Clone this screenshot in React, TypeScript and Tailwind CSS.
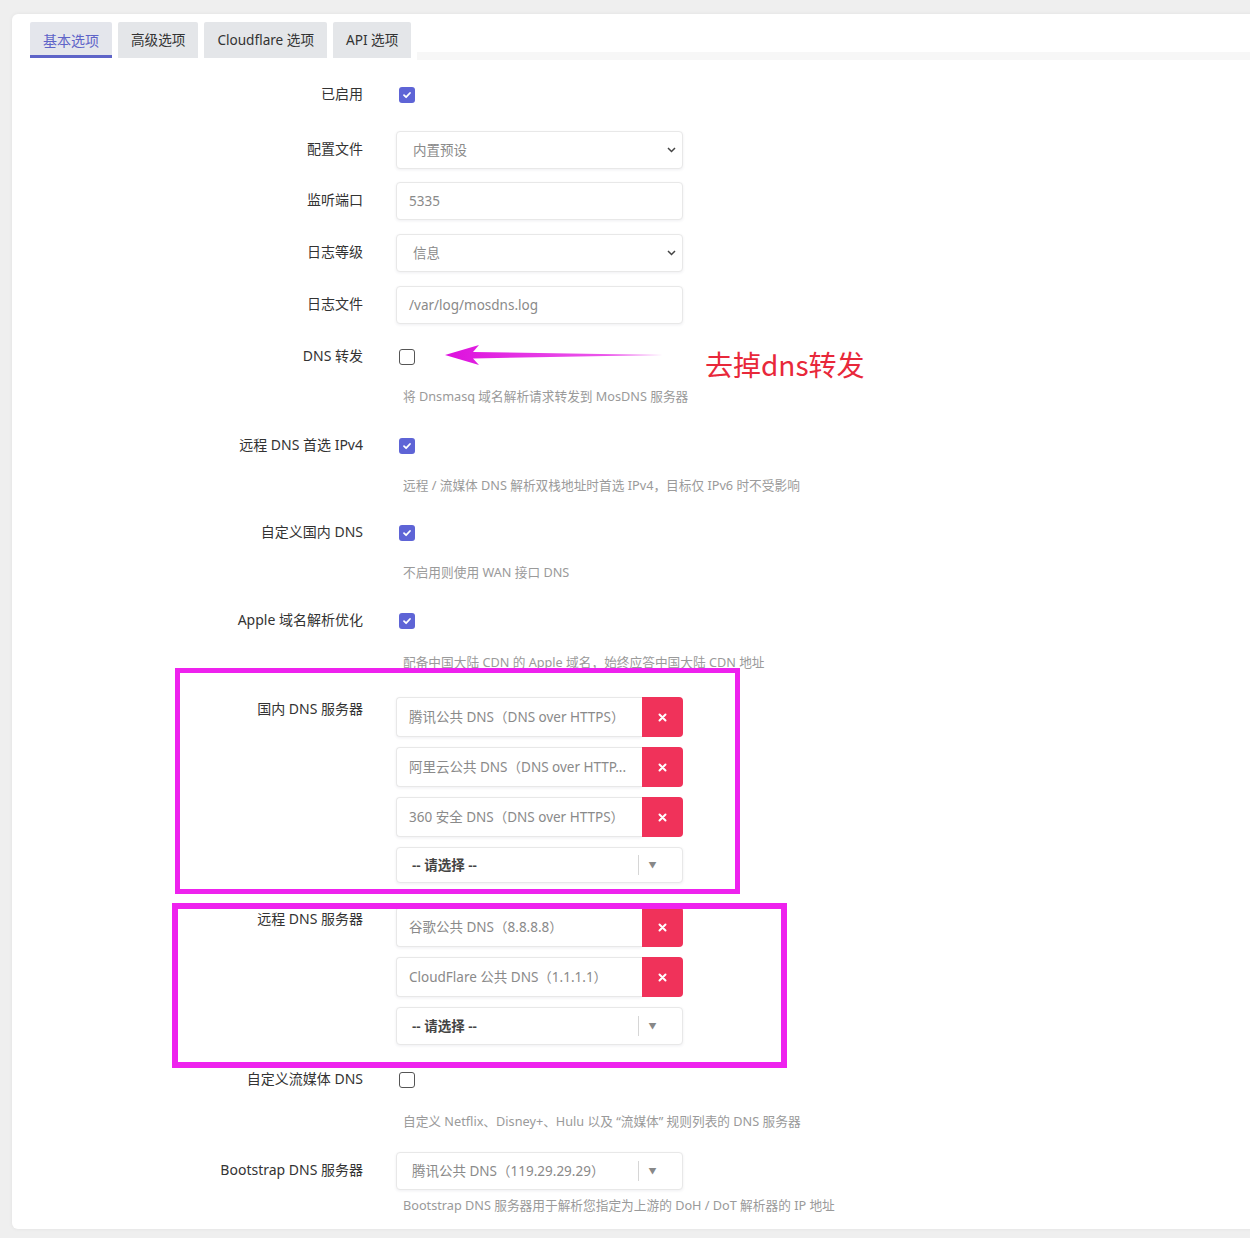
import React from "react";

const font = "font-['Noto_Sans','Noto_Sans_CJK_SC',sans-serif]";

function Check({ on }: { on: boolean }) {
  return on ? (
    <span className="ml-[3px] flex h-[16px] w-[16px] items-center justify-center rounded-[3px] bg-[#5e64d6]">
      <svg width="10" height="10" viewBox="0 0 10 10">
        <path d="M2 5.2 L4.1 7.2 L8 3" stroke="#fff" strokeWidth="1.8" fill="none" strokeLinecap="round" strokeLinejoin="round" />
      </svg>
    </span>
  ) : (
    <span className="ml-[3px] block h-[16px] w-[16px] rounded-[3px] border border-[#555] bg-white" />
  );
}

function Chevron() {
  return (
    <svg width="9" height="6" viewBox="0 0 9 6" className="mr-[2px] shrink-0">
      <path d="M1 1 L4.5 4.5 L8 1" stroke="#444" strokeWidth="1.5" fill="none" />
    </svg>
  );
}

function Label({ text, top }: { text: string; top?: boolean }) {
  return (
    <div
      className={
        top
          ? "w-[333px] shrink-0 pt-[2px] text-right text-[14px] leading-[20px] text-[#333]"
          : "w-[333px] shrink-0 text-right text-[14px] leading-[36px] text-[#333]"
      }
    >
      {text}
    </div>
  );
}

function Desc({ text, cls }: { text: string; cls?: string }) {
  return (
    <div className={"pl-[7px] text-[12.7px] leading-[18px] whitespace-nowrap text-[#9a9a9a] " + (cls ?? "mt-[11px]")}>
      {text}
    </div>
  );
}

function TextBox({ value, select }: { value: string; select?: boolean }) {
  return (
    <div className="flex h-[38px] w-[287px] items-center justify-between rounded-[4px] border border-[#e8e8e8] bg-white pr-[4px] text-[13.5px] text-[#8a8a8a] shadow-[0_1px_3px_rgba(50,50,93,0.08)]">
      <span className={select ? "pl-[16px]" : "pl-[12px]"}>{value}</span>
      {select ? <Chevron /> : null}
    </div>
  );
}

function XIcon() {
  return (
    <svg width="9" height="9" viewBox="0 0 9 9">
      <path d="M1.5 1.5 L7.5 7.5 M7.5 1.5 L1.5 7.5" stroke="#fff" strokeWidth="2" strokeLinecap="round" />
    </svg>
  );
}

function ListItem({ value }: { value: string }) {
  return (
    <div className="flex h-[40px] w-[287px] items-stretch">
      <div className="flex flex-1 items-center overflow-hidden rounded-l-[4px] border border-r-0 border-[#e8e8e8] bg-white pl-[12px] text-[13.5px] whitespace-nowrap text-[#8a8a8a] shadow-[0_1px_3px_rgba(50,50,93,0.08)]">
        {value}
      </div>
      <div className="flex w-[41px] items-center justify-center rounded-r-[4px] bg-[#f0325a]">
        <XIcon />
      </div>
    </div>
  );
}

function DropSelect({ value, placeholder, h }: { value: string; placeholder?: boolean; h: string }) {
  return (
    <div
      className={
        "flex w-[287px] items-center rounded-[4px] border border-[#e8e8e8] bg-white text-[13.5px] shadow-[0_1px_3px_rgba(50,50,93,0.08)] " + h
      }
    >
      <span className={placeholder ? "flex-1 pl-[15px] font-semibold text-[#444]" : "flex-1 pl-[15px] text-[#8a8a8a]"}>
        {value}
      </span>
      <span className="h-[20px] w-px bg-[#d6d6d6]" />
      <span className="flex w-[27px] justify-center text-[8px] text-[#888]">▼</span>
      <span className="w-[16px]" />
    </div>
  );
}

function Tab({ text, active }: { text: string; active?: boolean }) {
  return active ? (
    <div className="flex h-[36px] items-center rounded-t-[2px] border-b-[3px] border-[#5e64c8] bg-[#e4e6ec] px-[13px] pt-[3px] text-[14px] text-[#5e64c8]">
      {text}
    </div>
  ) : (
    <div className="flex h-[36px] items-center rounded-t-[2px] bg-[#e4e6e9] px-[13px] text-[13.6px] text-[#333]">{text}</div>
  );
}

export default function App() {
  return (
    <div className={"relative min-h-[1238px] w-[1250px] overflow-hidden bg-[#efefef] pt-[14px] pl-[12px] " + font}>
      <div className="w-[1250px] rounded-l-[6px] bg-white pt-[8px] pb-[15px] pl-[18px] shadow-[0_0_4px_rgba(0,0,0,0.06)]">
        {/* tabs */}
        <div className="flex items-end gap-[6px]">
          <Tab text="基本选项" active />
          <Tab text="高级选项" />
          <Tab text="Cloudflare 选项" />
          <Tab text="API 选项" />
          <div className="mb-[-2px] h-[8px] flex-1 bg-[#f7f7f7]" />
        </div>

        {/* 已启用 */}
        <div className="mt-[18px] flex">
          <Label text="已启用" />
          <div className="ml-[33px] flex h-[38px] items-center">
            <Check on />
          </div>
        </div>

        <div className="mt-[17px] flex">
          <Label text="配置文件" />
          <div className="ml-[33px]">
            <TextBox value="内置预设" select />
          </div>
        </div>

        <div className="mt-[13px] flex">
          <Label text="监听端口" />
          <div className="ml-[33px]">
            <TextBox value="5335" />
          </div>
        </div>

        <div className="mt-[14px] flex">
          <Label text="日志等级" />
          <div className="ml-[33px]">
            <TextBox value="信息" select />
          </div>
        </div>

        <div className="mt-[14px] flex">
          <Label text="日志文件" />
          <div className="ml-[33px]">
            <TextBox value="/var/log/mosdns.log" />
          </div>
        </div>

        <div className="mt-[14px] flex">
          <Label text="DNS 转发" />
          <div className="ml-[33px]">
            <div className="flex h-[38px] items-center">
              <Check on={false} />
            </div>
            <Desc text="将 Dnsmasq 域名解析请求转发到 MosDNS 服务器" />
          </div>
        </div>

        <div className="mt-[22px] flex">
          <Label text="远程 DNS 首选 IPv4" />
          <div className="ml-[33px]">
            <div className="flex h-[38px] items-center">
              <Check on />
            </div>
            <Desc text="远程 / 流媒体 DNS 解析双栈地址时首选 IPv4，目标仅 IPv6 时不受影响" />
          </div>
        </div>

        <div className="mt-[20px] flex">
          <Label text="自定义国内 DNS" />
          <div className="ml-[33px]">
            <div className="flex h-[38px] items-center">
              <Check on />
            </div>
            <Desc text="不启用则使用 WAN 接口 DNS" />
          </div>
        </div>

        <div className="mt-[21px] flex">
          <Label text="Apple 域名解析优化" />
          <div className="ml-[33px]">
            <div className="flex h-[38px] items-center">
              <Check on />
            </div>
            <Desc text="配备中国大陆 CDN 的 Apple 域名，始终应答中国大陆 CDN 地址" cls="mt-[13px]" />
          </div>
        </div>

        <div className="mt-[26px] flex">
          <Label text="国内 DNS 服务器" top />
          <div className="ml-[33px] flex flex-col gap-[10px]">
            <ListItem value="腾讯公共 DNS（DNS over HTTPS）" />
            <ListItem value="阿里云公共 DNS（DNS over HTTP..." />
            <ListItem value="360 安全 DNS（DNS over HTTPS）" />
            <DropSelect value="-- 请选择 --" placeholder h="h-[36px]" />
          </div>
        </div>

        <div className="mt-[24px] flex">
          <Label text="远程 DNS 服务器" top />
          <div className="ml-[33px] flex flex-col gap-[10px]">
            <ListItem value="谷歌公共 DNS（8.8.8.8）" />
            <ListItem value="CloudFlare 公共 DNS（1.1.1.1）" />
            <DropSelect value="-- 请选择 --" placeholder h="h-[38px]" />
          </div>
        </div>

        <div className="mt-[16px] flex">
          <Label text="自定义流媒体 DNS" />
          <div className="ml-[33px]">
            <div className="flex h-[38px] items-center">
              <Check on={false} />
            </div>
            <Desc text="自定义 Netflix、Disney+、Hulu 以及 “流媒体” 规则列表的 DNS 服务器" cls="mt-[13px]" />
          </div>
        </div>

        <div className="mt-[22px] flex">
          <Label text="Bootstrap DNS 服务器" />
          <div className="ml-[33px]">
            <DropSelect value="腾讯公共 DNS（119.29.29.29）" h="h-[38px]" />
            <Desc text="Bootstrap DNS 服务器用于解析您指定为上游的 DoH / DoT 解析器的 IP 地址" cls="mt-[6px]" />
          </div>
        </div>
      </div>

      {/* annotations */}
      <div className="absolute top-[668px] left-[175px] h-[226px] w-[565px] border-[5px] border-[#ee22ee]" />
      <div className="absolute top-[903px] left-[172px] h-[165px] w-[615px] border-[6px] border-[#ee22ee]" />
      <svg className="absolute top-[340px] left-[440px]" width="230" height="30" viewBox="440 340 230 30">
        <defs>
          <linearGradient id="ag" x1="0" x2="1" y1="0" y2="0">
            <stop offset="0" stopColor="#dd10dd" />
            <stop offset="1" stopColor="#f070f0" />
          </linearGradient>
        </defs>
        <polygon points="445,355 479,345 473,352 663,355 473,358.5 479,365" fill="url(#ag)" />
      </svg>
      <div className="absolute top-[345px] left-[705px] font-['Noto_Sans_CJK_SC',sans-serif] text-[28px] leading-[38px] text-[#e8283a]">
        去掉dns转发
      </div>
    </div>
  );
}
